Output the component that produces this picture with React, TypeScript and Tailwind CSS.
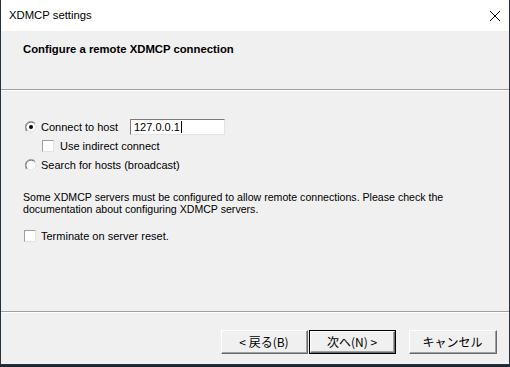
import React from "react";

const body = { fontFamily: '"Liberation Sans", "Noto Sans CJK JP", sans-serif' };
const jp = { fontFamily: '"Noto Sans CJK JP", sans-serif' };
const ui = { fontFamily: '"Liberation Sans", "Noto Sans", sans-serif' };

function Radio({ checked }: { checked?: boolean }) {
  return (
    <svg width="12" height="12" viewBox="0 0 12 12" className="shrink-0">
      <path d="M10.5 2.5 A6 6 0 0 0 1.5 10.5" stroke="#a0a0a0" fill="none" />
      <path d="M9.8 3 A5 5 0 0 0 2.2 9.8" stroke="#696969" fill="none" />
      <circle cx="6" cy="6" r="4.3" fill="#ffffff" />
      <path d="M1.5 10.5 A6 6 0 0 0 10.5 1.5" stroke="#ffffff" fill="none" />
      <path d="M2.2 9.8 A5 5 0 0 0 9.8 2.2" stroke="#e3e3e3" fill="none" />
      {checked && <circle cx="6" cy="6" r="2" fill="#000" />}
    </svg>
  );
}

function Check() {
  return (
    <div className="w-[12px] h-[12px] shrink-0 bg-white border-t border-l border-t-[#a0a0a0] border-l-[#a0a0a0] border-b border-r border-b-[#e3e3e3] border-r-[#e3e3e3]" />
  );
}

function Btn({ children, def }: { children: React.ReactNode; def?: boolean }) {
  return (
    <div
      className={
        "h-[24px] flex items-stretch " +
        (def ? "border border-[#000000]" : "")
      }
    >
      <div className="flex-1 flex items-stretch border-t border-l border-white border-b border-r border-b-[#696969] border-r-[#696969]">
        <div className="flex-1 flex items-center justify-center bg-[#f0f0f0] border-b border-r border-b-[#a0a0a0] border-r-[#a0a0a0] text-[12px] text-black" style={jp}>
          {children}
        </div>
      </div>
    </div>
  );
}

export default function App() {
  return (
    <div className="w-[510px] h-[367px] bg-[#1d2733] overflow-hidden">
      <div className="w-[510px] h-[365px] flex flex-col border-l border-r border-b border-[#24313f] bg-[#f0f0f0]">
        <div className="h-[31px] bg-white flex items-center pl-[8px] pr-[9px] shrink-0">
          <span className="text-[11.3px] text-black flex-1" style={ui}>XDMCP settings</span>
          <svg width="10" height="10" viewBox="0 0 10 10">
            <path d="M0 0 L10 10 M10 0 L0 10" stroke="#000" strokeWidth="1" />
          </svg>
        </div>
        <div className="h-[58px] shrink-0 pl-[22px] pt-[10px]">
          <div className="text-[11.3px] font-bold text-black" style={ui}>Configure a remote XDMCP connection</div>
        </div>
        <div className="h-[1px] bg-[#a0a0a0] shrink-0" />
        <div className="h-[1px] bg-white shrink-0" />
        <div className="flex-1 flex flex-col pl-[22px] text-[11px] text-black" style={body}>
          <div className="h-[28px]" />
          <div className="flex items-center h-[16px]">
            <div className="w-[18px] flex pl-[2px]"><Radio checked /></div>
            <span className="w-[89px]">Connect to host</span>
            <div className="w-[95px] h-[16px] bg-white border-t border-l border-[#7a7a7a] border-b border-r border-b-[#e3e3e3] border-r-[#e3e3e3] flex items-center pl-[3px]">
              <span>127.0.0.1</span>
              <span className="w-[1px] h-[12px] bg-black ml-[1px]" />
            </div>
          </div>
          <div className="flex items-center h-[14px] mt-[4px] pl-[19px]">
            <Check />
            <span className="ml-[6px]">Use indirect connect</span>
          </div>
          <div className="flex items-center h-[16px] mt-[4px]">
            <div className="w-[18px] flex pl-[2px]"><Radio /></div>
            <span>Search for hosts (broadcast)</span>
          </div>
          <div className="mt-[18px] leading-[12px] text-[10.6px]">
            Some XDMCP servers must be configured to allow remote connections. Please check the
            <br />
            documentation about configuring XDMCP servers.
          </div>
          <div className="flex items-center h-[14px] mt-[14px] pl-[1px]">
            <Check />
            <span className="ml-[5px]">Terminate on server reset.</span>
          </div>
        </div>
        <div className="h-[1px] bg-[#a0a0a0] shrink-0" />
        <div className="h-[1px] bg-white shrink-0" />
        <div className="h-[51px] shrink-0 flex items-start pt-[17px] pl-[220px]">
          <div className="w-[87px]"><Btn>&lt;&nbsp;戻る(B)</Btn></div>
          <div className="w-[87px] ml-[1px]"><Btn def>次へ(N)&nbsp;&gt;</Btn></div>
          <div className="w-[88px] ml-[13px]"><Btn>キャンセル</Btn></div>
        </div>
      </div>
    </div>
  );
}
